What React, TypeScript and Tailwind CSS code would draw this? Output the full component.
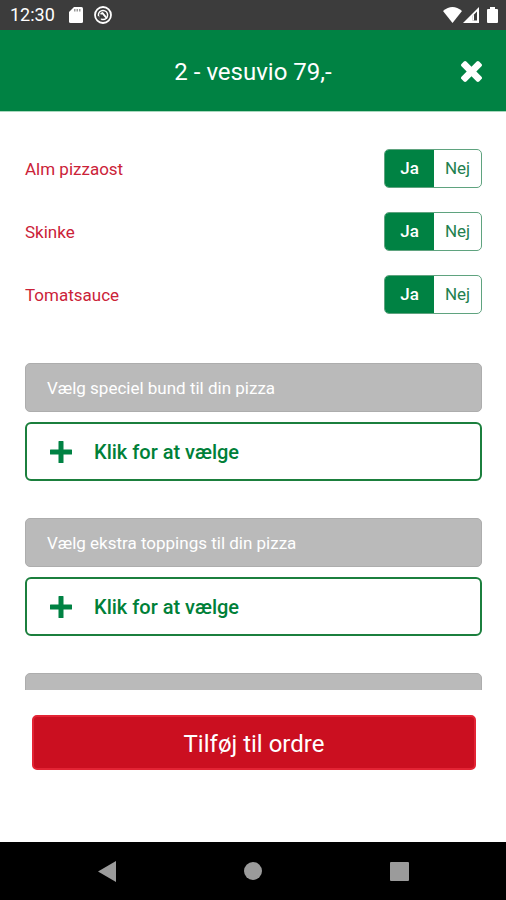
import { useState } from 'react';

const toppings = ['Alm pizzaost', 'Skinke', 'Tomatsauce'];
const sections = ['Vælg speciel bund til din pizza', 'Vælg ekstra toppings til din pizza'];

function StatusBar(){
    return(
        <div className="flex h-[30px] shrink-0 items-center justify-between bg-[#3c3c3c] pl-2.5 pr-2 text-white">
            <div className="flex items-center">
                <span className="text-[18px] leading-[30px]">12:30</span>
                <svg className="ml-3.5 h-4 w-3.5" viewBox="0 0 14 16">
                    <path fill="#fff" d="M5 0h7.500Q14 0 14 1.500v13q0 1.500-1.500 1.500h-11Q0 16 0 14.500V5z" />
                    <path fill="#999" d="M5 2h1.500v2.500H5zM7.500 2H9v2.500H7.500zM10 2h1.500v2.500H10z" />
                </svg>
                <svg className="ml-[11px] h-[18px] w-[18px]" viewBox="0 0 18 18" fill="none" stroke="#fff">
                    <circle cx="9" cy="9" r="8" strokeWidth="1.800" />
                    <circle cx="9" cy="9" r="4.600" strokeWidth="1.500" />
                    <path strokeWidth="1.900" d="M6.500 7.800l2-.6 4.500 5.300" />
                    <path stroke="#3c3c3c" strokeWidth="1.500" d="M4 10.500l3 3" />
                </svg>
            </div>
            <div className="flex items-center">
                <svg className="h-4 w-[19px]" viewBox="0 0 19 16">
                    <path fill="#fff" d="M0 4Q9.500-4 19 4L9.500 16z" />
                </svg>
                <svg className="ml-px h-4 w-4" viewBox="0 0 16 16">
                    <path fill="#fff" fillRule="evenodd" d="M16 0v16H0zM14 4.500L9.500 9v4.500H14z" />
                    <path fill="#fff" d="M9.400 9.100L11 7.500v6H9.400z" />
                </svg>
                <svg className="ml-2 h-4 w-[11px]" viewBox="0 0 11 16">
                    <path fill="#fff" d="M3 0h5v2h2q1 0 1 1v12q0 1-1 1H1q-1 0-1-1V3q0-1 1-1h2z" />
                </svg>
            </div>
        </div>
    );
}

function ToppingRow({ name }: { name: string }){
    const [included, setIncluded] = useState(true);
    const option = "relative flex w-[47px] cursor-pointer items-center justify-center pt-px text-[17px] text-[#23804f] has-checked:w-[49px] has-checked:bg-[#008243] has-checked:font-medium has-checked:text-white";
    const radio = "absolute inset-0 cursor-pointer appearance-none";

    return(
        <div className="flex items-center justify-between" role="radiogroup" aria-labelledby={name}>
            <span id={name} className="text-[17px] leading-6 text-[#cb2238]">{name}</span>
            <div className="flex h-[39px] overflow-hidden rounded-[5px] border border-[#5fa37f]">
                <label className={option}>
                    <input className={radio} type="radio" name={name} checked={included} onChange={() => setIncluded(true)} />
                    Ja
                </label>
                <label className={option}>
                    <input className={radio} type="radio" name={name} checked={!included} onChange={() => setIncluded(false)} />
                    Nej
                </label>
            </div>
        </div>
    );
}

function Section({ title }: { title: string }){
    return(
        <section className="flex flex-col gap-[10px]">
            <h2 className="h-[49px] rounded-[5px] border border-[#adadad] bg-[#bababa] px-[21px] text-[17px] leading-[48px] text-white">{title}</h2>
            <button
            className="flex h-[59px] w-full items-center rounded-md border-2 border-[#1b7f3d] pl-[23px] text-left text-[20px] font-medium text-[#008038]"
            type="button">
                <svg className="mr-[22px] h-[22px] w-[22px]" viewBox="0 0 22 22">
                    <path fill="#008243" d="M9 0h4q.5 0 .5.500v8h8q.5 0 .5.500v4q0 .5-.5.500h-8v8q0 .5-.5.500H9q-.5 0-.5-.5v-8h-8q-.5 0-.5-.5V9q0-.5.5-.5h8v-8q0-.5.5-.5z" />
                </svg>
                Klik for at vælge
            </button>
        </section>
    );
}

export default function App(){
    return(
        <div className="flex h-screen flex-col bg-white font-['Roboto',sans-serif]">
            <StatusBar />
            <header className="grid h-[82px] shrink-0 grid-cols-[1fr_auto_1fr] items-center border-b border-[#a9d8bd] bg-[#008243] px-6 pt-0.5 text-white">
                <h1 className="col-start-2 text-[24px] leading-8">2 - vesuvio 79,-</h1>
                <button className="justify-self-end" type="button" aria-label="Luk">
                    <svg className="h-[21px] w-[21px]" viewBox="302 366 1188 1188">
                        <path fill="#fff" d="M1490 1322q0 40-28 68l-136 136q-28 28-68 28t-68-28l-294-294-294 294q-28 28-68 28t-68-28l-136-136q-28-28-28-68t28-68l294-294-294-294q-28-28-28-68t28-68l136-136q28-28 68-28t68 28l294 294 294-294q28-28 68-28t68 28l136 136q28 28 28 68t-28 68l-294 294 294 294q28 28 28 68z" />
                    </svg>
                </button>
            </header>

            <main className="min-h-0 flex-1 overflow-y-auto pl-[25px] pr-6 pt-[37px] [scrollbar-width:none]">
                <div className="flex flex-col gap-6">
                    {toppings.map(name => <ToppingRow key={name} name={name} />)}
                </div>
                <div className="mt-[49px] flex flex-col gap-[37px]">
                    {sections.map(title => <Section key={title} title={title} />)}
                    <div className="h-[49px] rounded-[5px] border border-[#adadad] bg-[#bababa]"></div>
                </div>
            </main>

            <footer className="shrink-0 pb-[72px] pl-8 pr-[30px] pt-[25px]">
                <button
                className="h-[55px] w-full rounded-[5px] border-2 border-[#e32434] bg-[#cb0f20] pt-0.5 text-[24px] text-white"
                type="button">
                    Tilføj til ordre
                </button>
            </footer>

            <nav className="grid h-[58px] shrink-0 grid-cols-3 items-center justify-items-center bg-black px-[34px]">
                <button type="button" aria-label="Tilbage">
                    <svg className="h-[21px] w-[18px]" viewBox="0 0 18 21"><path fill="#9b9b9b" d="M18 0v21L0 10.500z" /></svg>
                </button>
                <button className="h-[18px] w-[18px] rounded-full bg-[#9b9b9b]" type="button" aria-label="Hjem"></button>
                <button className="h-[19px] w-[19px] rounded-[1px] bg-[#9b9b9b]" type="button" aria-label="Oversigt"></button>
            </nav>
        </div>
    );
}
